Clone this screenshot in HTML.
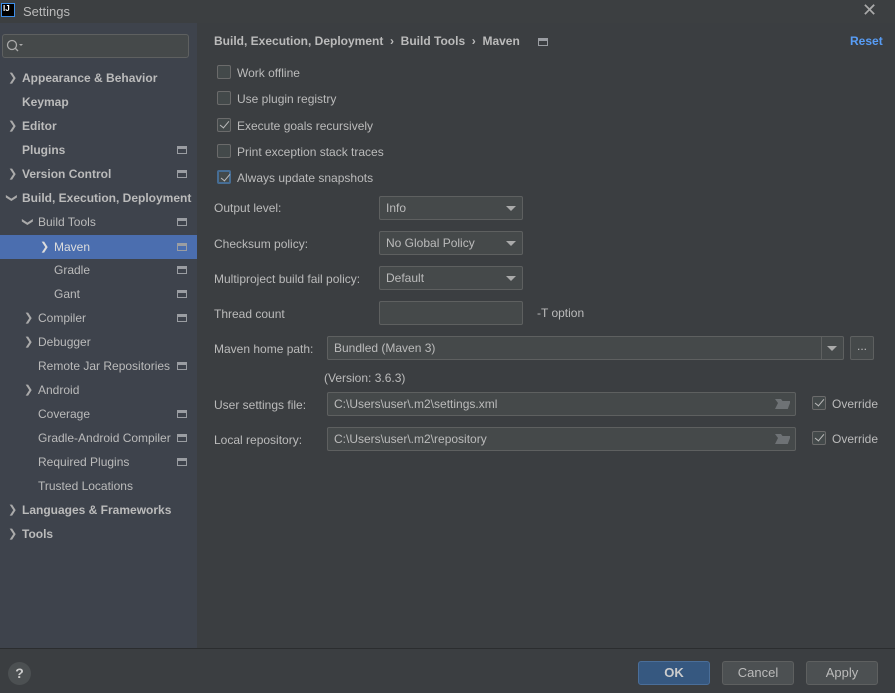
<!DOCTYPE html>
<html><head><meta charset="utf-8"><style>
*{box-sizing:border-box;margin:0;padding:0}
body{width:895px;height:693px;background:#3b3e41;font-family:"Liberation Sans",sans-serif;font-size:12px;color:#bbbbbb;position:relative;overflow:hidden}
.abs{position:absolute}
.title{left:0;top:0;width:895px;height:23px;background:#3c3f41}
.side{left:0;top:23px;width:197px;height:626px;background:#3e434c}
.tree div{position:absolute;left:0;width:197px;height:24px;line-height:24px;white-space:nowrap}
.b{font-weight:bold}
.ic{position:absolute;right:10px;top:8px;width:10px;height:8px;border:1.5px solid #9a9da2;border-top-width:3px}
.chev{position:absolute;font-size:11px;color:#aaa}
.cb{position:absolute;width:14px;height:14px;border:1px solid #6b6b6b;background:#43494a;border-radius:2px}
.chk::after{content:"";position:absolute;left:4px;top:0px;width:4px;height:8px;border:solid #bbb;border-width:0 1.5px 1.5px 0;transform:rotate(40deg)}
.lbl{position:absolute;white-space:nowrap}
.field{position:absolute;border:1px solid #5e6060;background:#45494a;border-radius:2px;height:24px;line-height:22px;padding-left:6px;color:#bbb}
.tri{position:absolute;width:0;height:0;border-left:5px solid transparent;border-right:5px solid transparent;border-top:5px solid #aaa}
.btn{position:absolute;top:661px;height:24px;line-height:22px;text-align:center;border:1px solid #5e6060;border-radius:3px;background:#4c5052;font-size:13px;color:#bbb}
.fold{position:absolute;width:15px;height:10px;background:#6e7275;clip-path:polygon(0 0,40% 0,50% 20%,100% 20%,100% 40%,20% 40%,0 100%,85% 100%,100% 40%,20% 40%)}
</style></head><body>
<div class="abs title"></div>
<div class="abs" style="left:1px;top:3px;width:14px;height:14px;background:#000;border:1px solid #3d8ee8;color:#fff;font-size:8px;font-weight:bold;line-height:10px;padding-left:1px">IJ</div>
<div class="lbl" style="left:23px;top:4px;font-size:13px;color:#bbb">Settings</div>
<div class="lbl" style="left:862px;top:0px;font-size:18px;color:#aaa">✕</div>
<div class="abs side"></div>
<div class="abs" style="left:2px;top:34px;width:187px;height:24px;border:1px solid #5e6060;border-radius:3px;background:#45494a"></div>
<svg class="abs" style="left:6px;top:39px" width="18" height="14"><circle cx="6" cy="6" r="4.5" fill="none" stroke="#aaa" stroke-width="1.3"/><line x1="9" y1="9" x2="12" y2="12" stroke="#aaa" stroke-width="1.3"/><path d="M13 5l4 0l-2 2z" fill="#aaa"/></svg>
<div class="tree">
<div style="top:66px"><span class="chev" style="left:8px">❯</span><span class="b" style="position:absolute;left:22px">Appearance &amp; Behavior</span></div>
<div style="top:90px"><span class="b" style="position:absolute;left:22px">Keymap</span></div>
<div style="top:114px"><span class="chev" style="left:8px">❯</span><span class="b" style="position:absolute;left:22px">Editor</span></div>
<div style="top:138px"><span class="b" style="position:absolute;left:22px">Plugins</span><i class="ic"></i></div>
<div style="top:162px"><span class="chev" style="left:8px">❯</span><span class="b" style="position:absolute;left:22px">Version Control</span><i class="ic"></i></div>
<div style="top:186px"><span class="chev" style="left:7px;transform:rotate(90deg)">❯</span><span class="b" style="position:absolute;left:22px">Build, Execution, Deployment</span></div>
<div style="top:210px"><span class="chev" style="left:23px;transform:rotate(90deg)">❯</span><span style="position:absolute;left:38px">Build Tools</span><i class="ic"></i></div>
<div style="top:235px;background:#4b6eaf;color:#ddd"><span class="chev" style="left:40px;color:#ddd">❯</span><span style="position:absolute;left:54px">Maven</span><i class="ic"></i></div>
<div style="top:258px"><span style="position:absolute;left:54px">Gradle</span><i class="ic"></i></div>
<div style="top:282px"><span style="position:absolute;left:54px">Gant</span><i class="ic"></i></div>
<div style="top:306px"><span class="chev" style="left:24px">❯</span><span style="position:absolute;left:38px">Compiler</span><i class="ic"></i></div>
<div style="top:330px"><span class="chev" style="left:24px">❯</span><span style="position:absolute;left:38px">Debugger</span></div>
<div style="top:354px"><span style="position:absolute;left:38px">Remote Jar Repositories</span><i class="ic"></i></div>
<div style="top:378px"><span class="chev" style="left:24px">❯</span><span style="position:absolute;left:38px">Android</span></div>
<div style="top:402px"><span style="position:absolute;left:38px">Coverage</span><i class="ic"></i></div>
<div style="top:426px"><span style="position:absolute;left:38px">Gradle-Android Compiler</span><i class="ic"></i></div>
<div style="top:450px"><span style="position:absolute;left:38px">Required Plugins</span><i class="ic"></i></div>
<div style="top:474px"><span style="position:absolute;left:38px">Trusted Locations</span></div>
<div style="top:498px"><span class="chev" style="left:8px">❯</span><span class="b" style="position:absolute;left:22px">Languages &amp; Frameworks</span></div>
<div style="top:522px"><span class="chev" style="left:8px">❯</span><span class="b" style="position:absolute;left:22px">Tools</span></div>
</div>
<div class="lbl b" style="left:214px;top:34px">Build, Execution, Deployment &nbsp;› &nbsp;Build Tools &nbsp;› &nbsp;Maven</div>
<i class="ic" style="position:absolute;left:538px;top:38px;right:auto"></i>
<div class="lbl b" style="left:850px;top:34px;color:#589df6">Reset</div>
<div class="cb" style="left:217px;top:65px"></div><div class="lbl" style="left:237px;top:66px">Work offline</div>
<div class="cb" style="left:217px;top:91px"></div><div class="lbl" style="left:237px;top:92px">Use plugin registry</div>
<div class="cb chk" style="left:217px;top:118px"></div><div class="lbl" style="left:237px;top:119px">Execute goals recursively</div>
<div class="cb" style="left:217px;top:144px"></div><div class="lbl" style="left:237px;top:145px">Print exception stack traces</div>
<div class="cb chk" style="left:217px;top:170px;border:2px solid #466d94"></div><div class="lbl" style="left:237px;top:171px">Always update snapshots</div>
<div class="lbl" style="left:214px;top:201px">Output level:</div>
<div class="field" style="left:379px;top:196px;width:144px">Info<i class="tri" style="right:6px;top:9px"></i></div>
<div class="lbl" style="left:214px;top:237px">Checksum policy:</div>
<div class="field" style="left:379px;top:231px;width:144px">No Global Policy<i class="tri" style="right:6px;top:9px"></i></div>
<div class="lbl" style="left:214px;top:272px">Multiproject build fail policy:</div>
<div class="field" style="left:379px;top:266px;width:144px">Default<i class="tri" style="right:6px;top:9px"></i></div>
<div class="lbl" style="left:214px;top:307px">Thread count</div>
<div class="field" style="left:379px;top:301px;width:144px"></div>
<div class="lbl" style="left:537px;top:306px">-T option</div>
<div class="lbl" style="left:214px;top:342px">Maven home path:</div>
<div class="field" style="left:327px;top:336px;width:517px">Bundled (Maven 3)<span style="position:absolute;left:493px;top:0;width:1px;height:22px;background:#5e6060"></span><i class="tri" style="right:6px;top:9px"></i></div>
<div class="field" style="left:850px;top:336px;width:24px;padding:0;text-align:center;line-height:18px">...</div>
<div class="lbl" style="left:324px;top:371px">(Version: 3.6.3)</div>
<div class="lbl" style="left:214px;top:398px">User settings file:</div>
<div class="field" style="left:327px;top:392px;width:469px">C:\Users\user\.m2\settings.xml<i class="fold" style="right:5px;top:6px"></i></div>
<div class="cb chk" style="left:812px;top:396px"></div><div class="lbl" style="left:832px;top:397px">Override</div>
<div class="lbl" style="left:214px;top:433px">Local repository:</div>
<div class="field" style="left:327px;top:427px;width:469px">C:\Users\user\.m2\repository<i class="fold" style="right:5px;top:6px"></i></div>
<div class="cb chk" style="left:812px;top:431px"></div><div class="lbl" style="left:832px;top:432px">Override</div>
<div class="abs" style="left:0;top:648px;width:895px;height:1px;background:#2b2d2f"></div>
<div class="abs" style="left:8px;top:662px;width:23px;height:23px;border-radius:50%;background:#4c5052;color:#ccc;font-weight:bold;font-size:14px;text-align:center;line-height:23px">?</div>
<div class="btn b" style="left:638px;width:72px;background:#365880;border-color:#4a6e99;color:#ccc">OK</div>
<div class="btn" style="left:722px;width:72px">Cancel</div>
<div class="btn" style="left:806px;width:72px">Apply</div>
</body></html>
